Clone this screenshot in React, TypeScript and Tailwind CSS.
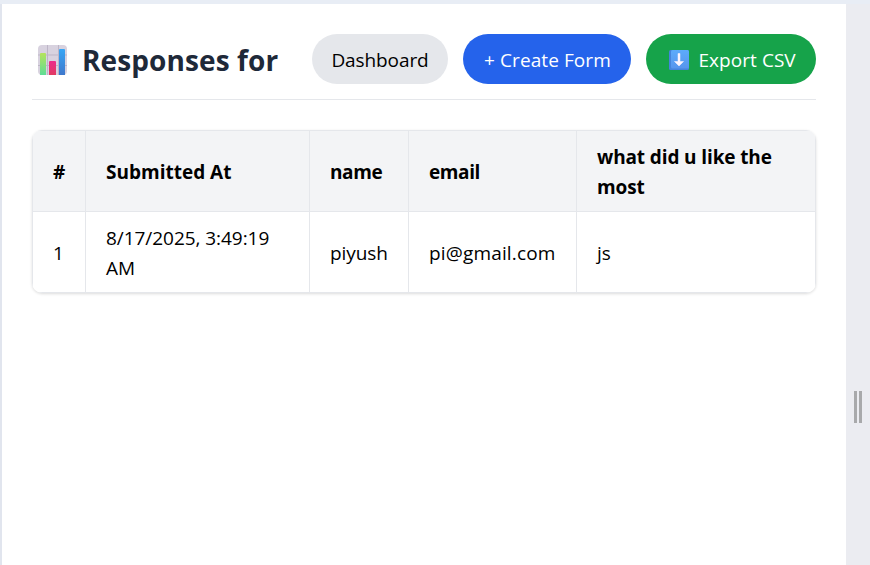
import React from "react";

function ChartIcon() {
  return (
    <svg width="30" height="30" viewBox="0 0 30 30" className="block shrink-0">
      <defs>
        <linearGradient id="green" x1="0" y1="0" x2="0" y2="1">
          <stop offset="0" stopColor="#b5e35c" />
          <stop offset="1" stopColor="#5fdc96" />
        </linearGradient>
        <linearGradient id="pink" x1="0" y1="0" x2="0" y2="1">
          <stop offset="0" stopColor="#ec2c8c" />
          <stop offset="1" stopColor="#e03a62" />
        </linearGradient>
        <linearGradient id="blue" x1="0" y1="0" x2="0" y2="1">
          <stop offset="0" stopColor="#37a6f5" />
          <stop offset="1" stopColor="#3f78cc" />
        </linearGradient>
      </defs>
      <rect width="29" height="30" rx="4" fill="#d8d2df" />
      <path d="M0 10H29M0 20.5H29M9.5 0V30M20.5 0V30" stroke="#bdb5c7" strokeWidth="1" />
      <path d="M2 30V9Q2 8 3 8H7Q8 8 8 9V30Z" fill="url(#green)" />
      <path d="M11 30V17Q11 16 12 16H17Q18 16 18 17V30Z" fill="url(#pink)" />
      <path d="M21 30V5Q21 4 22 4H26Q27 4 27 5V30Z" fill="url(#blue)" />
    </svg>
  );
}

function DownIcon() {
  return (
    <svg width="20" height="20" viewBox="0 0 20 20" className="block shrink-0">
      <defs>
        <linearGradient id="tile" x1="0" y1="0" x2="0" y2="1">
          <stop offset="0" stopColor="#5cabfb" />
          <stop offset="1" stopColor="#5795ee" />
        </linearGradient>
      </defs>
      <rect width="20" height="20" rx="1.5" fill="#4584dc" />
      <rect x="2" width="18" height="18.5" rx="1.5" fill="url(#tile)" />
      <path d="M9 3.5H11V11.5H14.5L10 16L5.5 11.5H9Z" fill="#fbf4ff" stroke="#fbf4ff" strokeWidth=".5" strokeLinejoin="round" />
    </svg>
  );
}

const cell = "border border-gray-200 pt-[11px] pb-[9px] pl-5 pr-2 text-left align-middle";

export default function App() {
  return (
    <div className="flex h-[565px] w-[870px] flex-col overflow-hidden bg-[#e8edf5] pt-1 font-['Open_Sans','Noto_Sans',sans-serif] text-[19px] leading-[30px] text-black">
      <div className="flex flex-1">
        <div className="w-0.5 shrink-0 bg-[#e1e5ee]" />
        <main className="w-[844px] shrink-0 bg-white px-[30px] pt-[30px]">
          <header className="flex h-[66px] items-start border-b border-gray-200">
            <h1 className="flex h-[50px] w-[280px] items-center gap-[14px] pl-[6px] pt-[2px] text-[28px] font-bold text-gray-800">
              <ChartIcon />
              <span className="whitespace-nowrap tracking-[0.1px]">Responses for</span>
            </h1>
            <nav className="flex gap-[15px] whitespace-nowrap">
              <button className="h-[50px] w-[136px] rounded-full bg-gray-200 pt-0.5 tracking-[-0.1px]">Dashboard</button>
              <button className="h-[50px] w-[168px] rounded-full bg-[#2563eb] pl-px pt-0.5 tracking-[0.08px] text-white">+ Create Form</button>
              <button className="flex h-[50px] w-[170px] items-center gap-[9.5px] rounded-full bg-[#16a34a] pl-[23px] pt-0.5 text-white">
                <DownIcon />
                <span className="tracking-[0.05px]">Export CSV</span>
              </button>
            </nav>
          </header>
          <div className="mt-[30px] h-[163px] w-[784px] overflow-hidden rounded-[10px] shadow-[0_1px_3px_rgba(0,0,0,0.14)]">
            <table className="h-[163px] w-[784px] table-fixed border-collapse">
              <colgroup>
                <col className="w-[53px]" />
                <col className="w-[224px]" />
                <col className="w-[99px]" />
                <col className="w-[168px]" />
                <col className="w-[239px]" />
              </colgroup>
              <thead className="bg-gray-100">
                <tr>
                  <th className={cell}>#</th>
                  <th className={cell}>Submitted At</th>
                  <th className={cell}><span className="tracking-[-0.4px]">name</span></th>
                  <th className={cell}><span className="tracking-[-0.4px]">email</span></th>
                  <th className={cell}><span className="tracking-[-0.12px]">what did u like the<br />most</span></th>
                </tr>
              </thead>
              <tbody>
                <tr>
                  <td className={cell}>1</td>
                  <td className={cell}><span className="tracking-[-0.05px]">8/17/2025, 3:49:19<br />AM</span></td>
                  <td className={cell}><span className="tracking-[-0.1px]">piyush</span></td>
                  <td className={cell}><span className="tracking-[0.16px]">pi@gmail.com</span></td>
                  <td className={cell}>js</td>
                </tr>
              </tbody>
            </table>
          </div>
        </main>
        <aside className="flex flex-1 justify-center gap-[2px] bg-[#ebecf1] pt-[387px]">
          <div className="h-8 w-[3px] bg-[#a8a9ab]" />
          <div className="h-8 w-[3px] bg-[#a8a9ab]" />
        </aside>
      </div>
    </div>
  );
}
